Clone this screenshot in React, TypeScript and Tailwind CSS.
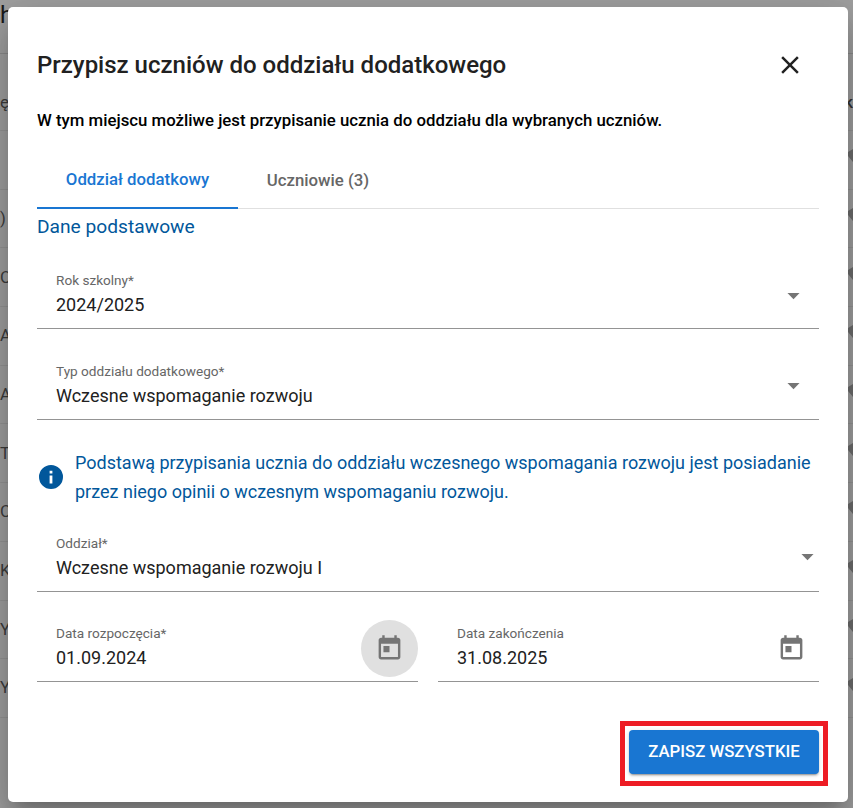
import React from 'react';

const rowLetters = ['', ')', 'OI', 'A', 'A', 'T', 'C', 'K', 'Y', 'Y'];

const CalendarIcon = () => (
  <svg width="29" height="29" viewBox="0 0 24 24" fill="#757575">
    <path d="M19 3h-1V1h-2v2H8V1H6v2H5c-1.11 0-1.99.9-1.99 2L3 19c0 1.1.89 2 2 2h14c1.1 0 2-.9 2-2V5c0-1.1-.9-2-2-2zm0 16H5V8h14v11zM7 10h5v5H7z" />
  </svg>
);

const Caret = ({ className }: { className: string }) => (
  <svg className={`shrink-0 self-start ${className}`} width="29" height="29" viewBox="0 0 24 24" fill="#757575">
    <path d="M7 10l5 5 5-5z" />
  </svg>
);

const FieldText = ({ label, value }: { label: string; value: string }) => (
  <div className="self-end pb-[11px]">
    <div className="mb-[2px] text-[13.6px] leading-[21px] text-[#666666]">{label}</div>
    <div className="text-[18px] leading-[24px] text-[#212121]">{value}</div>
  </div>
);

const SelectField = ({ label, value, className, caretClass }: { label: string; value: string; className: string; caretClass: string }) => (
  <div className={`flex h-[59px] justify-between border-b border-[#949494] pl-[19px] ${className}`}>
    <FieldText label={label} value={value} />
    <Caret className={caretClass} />
  </div>
);

const App = () => {
  return (
    <div className="relative h-[808px] w-[853px] overflow-hidden bg-[#a0a0a0] font-['Roboto',sans-serif]">
      {/* page behind the overlay */}
      <div className="h-[54px] border-b border-[#8c8c8c] pt-[2px] text-[24px] leading-[26px] text-[#1a1a1a]">h</div>
      <div className="flex h-[77px] items-center justify-between border-b border-[#959595] pt-[22px] text-[16.8px] text-[#3c3c3c]">
        <span>ę</span>
        <span className="font-medium text-[#333333]">k</span>
      </div>
      <div className="flex flex-col">
        {rowLetters.map((l, i) => (
          <div key={i} className="flex h-[58.7px] items-center justify-between border-b border-[#959595] text-[16.8px] text-[#3c3c3c]">
            <span>{l}</span>
            <svg className="mb-[1px] mr-[-17px] shrink-0" width="22" height="22" viewBox="0 0 22 22" fill="#6e6e6e">
              <path d="M0 4l5-3 5 3v5l5 7-5 4-10-12z" />
            </svg>
          </div>
        ))}
      </div>

      {/* dialog */}
      <div className="absolute left-[8px] top-[7px] flex h-[795px] w-[840px] flex-col rounded-[5px] bg-white px-[29px] shadow-[0_11px_15px_-7px_rgba(0,0,0,0.2),0_24px_38px_3px_rgba(0,0,0,0.14),0_9px_46px_8px_rgba(0,0,0,0.12)]">
        <div className="flex h-[114px] flex-col">
          <div className="flex items-center justify-between pt-[41px]">
            <h2 className="text-[24px] font-medium leading-[34px] text-[#212121]">Przypisz uczniów do oddziału dodatkowego</h2>
            <svg className="mr-[14px]" width="30" height="30" viewBox="0 0 24 24" fill="#212121">
              <path d="M19 6.41L17.59 5 12 10.59 6.41 5 5 6.41 10.59 12 5 17.59 6.41 19 12 13.41 17.59 19 19 17.59 13.41 12z" />
            </svg>
          </div>
          <p className="mt-[26px] text-[16.8px] font-medium leading-[24px] text-black">W tym miejscu możliwe jest przypisanie ucznia do oddziału dla wybranych uczniów.</p>
        </div>

        <div className="mt-[28px] flex h-[60px] border-b border-[#e0e0e0] text-[16.8px] font-medium">
          <div className="flex h-[60px] w-[201px] items-center justify-center border-b-2 border-[#1976d2] pt-[4px] text-[#1976d2]">Oddział dodatkowy</div>
          <div className="flex h-[59px] w-[160px] items-center justify-center pt-[4px] text-[#666666]">Uczniowie (3)</div>
        </div>

        <h3 className="mt-[5px] text-[19.2px] leading-[26px] text-[#01579b]">Dane podstawowe</h3>

        <SelectField label="Rok szkolny*" value="2024/2025" className="mt-[30px]" caretClass="mr-[11px] mt-[11px]" />
        <SelectField label="Typ oddziału dodatkowego*" value="Wczesne wspomaganie rozwoju" className="mt-[32px]" caretClass="mr-[11px] mt-[10px]" />

        <div className="mt-[28px] flex items-center gap-[12px]">
          <svg className="ml-[2px] shrink-0" width="24" height="24" viewBox="0 0 24 24" fill="#01579b">
            <path d="M12 0a12 12 0 1 0 0 24 12 12 0 0 0 0-24zm1.4 18.5h-2.8v-8h2.8v8zm0-10h-2.8V5.8h2.8v2.7z" />
          </svg>
          <p className="text-[18px] leading-[29px] text-[#01579b]">Podstawą przypisania ucznia do oddziału wczesnego wspomagania rozwoju jest posiadanie przez niego opinii o wczesnym wspomaganiu rozwoju.</p>
        </div>

        <SelectField label="Oddział*" value="Wczesne wspomaganie rozwoju I" className="mt-[27px]" caretClass="mr-[-3px] mt-[9px]" />

        <div className="mt-[31px] grid grid-cols-2 gap-[20px]">
          <div className="flex h-[59px] justify-between border-b border-[#949494] pl-[19px]">
            <FieldText label="Data rozpoczęcia*" value="01.09.2024" />
            <div className="mt-[-3px] flex h-[57px] w-[57px] items-center justify-center self-start rounded-full bg-[#e0e0e0]">
              <CalendarIcon />
            </div>
          </div>
          <div className="flex h-[59px] justify-between border-b border-[#949494] pl-[19px]">
            <FieldText label="Data zakończenia" value="31.08.2025" />
            <div className="mr-[-1px] mt-[-3px] flex h-[57px] w-[57px] items-center justify-center self-start">
              <CalendarIcon />
            </div>
          </div>
        </div>

        <div className="mt-[48px] flex justify-end">
          <div className="relative">
            <button className="h-[44px] w-[190px] rounded-[4px] bg-[#1976d2] text-[16.8px] font-medium text-white shadow-[0_3px_1px_-2px_rgba(0,0,0,0.2),0_2px_2px_0_rgba(0,0,0,0.14),0_1px_5px_0_rgba(0,0,0,0.12)]">ZAPISZ WSZYSTKIE</button>
            <div className="absolute -inset-x-[9px] -bottom-[12px] -top-[9px] border-[5px] border-[#ed1c24]" />
          </div>
        </div>
      </div>
    </div>
  );
};

export default App;
